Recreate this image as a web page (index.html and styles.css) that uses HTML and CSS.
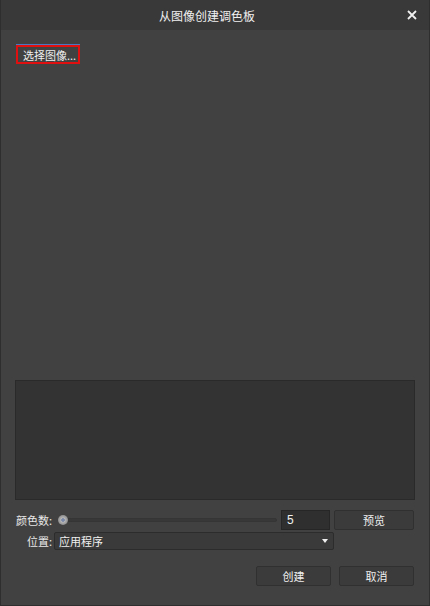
FILE: index.html
```html
<!DOCTYPE html>
<html lang="zh">
<head>
<meta charset="utf-8">
<link rel="stylesheet" href="styles.css">
</head>
<body>
<div class="dialog">
  <div class="titlebar">
    <span class="title">从图像创建调色板</span>
    <span class="close">
      <svg width="10" height="10" viewBox="0 0 10 10"><path d="M1 1 L9 9 M9 1 L1 9" stroke="#f0f0f0" stroke-width="1.8" fill="none"/></svg>
    </span>
  </div>
  <div class="content">
    <div class="top">
      <button class="select-btn">选择图像...</button>
    </div>
    <div class="preview"></div>
    <div class="row row1">
      <span class="label">颜色数:</span>
      <div class="slider"><div class="track"></div><div class="thumb"></div></div>
      <div class="numbox">5</div>
      <button class="btn preview-btn">预览</button>
    </div>
    <div class="row row2">
      <span class="label">位置:</span>
      <div class="select"><span>应用程序</span><span class="arrow"></span></div>
    </div>
    <div class="actions">
      <button class="btn action">创建</button>
      <button class="btn action">取消</button>
    </div>
  </div>
</div>
</body>
</html>
```
FILE: styles.css
```css
* { box-sizing: border-box; }
html, body { margin: 0; padding: 0; background: #414141; }
body {
  font-family: "Noto Sans CJK SC", "Liberation Sans", sans-serif;
  font-size: 11px;
  color: #e8e8e8;
}
.dialog {
  width: 430px;
  height: 606px;
  display: flex;
  flex-direction: column;
  background: #414141;
  border: 1px solid #2e2e2e;
  border-top: none;
}
.titlebar {
  height: 30px;
  flex: none;
  background: #393939;
  display: flex;
  align-items: center;
  justify-content: center;
  padding-right: 16px;
  position: relative;
}
.title { font-size: 12px; color: #f0f0f0; }
.close {
  position: absolute;
  right: 12px;
  top: 10px;
  width: 10px;
  height: 10px;
  display: flex;
}
.content {
  flex: 1;
  display: flex;
  flex-direction: column;
  padding: 15px 14px 19px 14px;
}
.top { flex: 1; }
.select-btn {
  font-family: inherit;
  font-size: 11px;
  color: #f0f0f0;
  background: #414141;
  border: 2px solid #e01010;
  box-shadow: 0 -1px 0 #4a78c0;
  height: 19px;
  width: 64px;
  padding: 0 0 0 5px;
  line-height: 14px;
  margin-left: 1px;
  display: flex;
  align-items: center;
  white-space: nowrap;
}
.preview {
  height: 120px;
  background: #333333;
  border: 1px solid #2a2a2a;
}
.row { display: flex; align-items: center; white-space: nowrap; }
.row1 { margin-top: 10px; height: 20px; }
.row2 { margin-top: 2px; height: 18px; }
.label { width: 37px; text-align: right; color: #e8e8e8; flex: none; white-space: nowrap; }
.slider {
  position: relative;
  width: 222px;
  height: 20px;
  margin-left: 3px;
  margin-right: 4px;
  flex: none;
}
.track {
  position: absolute;
  left: 4px; right: 0;
  top: 8px;
  height: 4px;
  border-radius: 2px;
  background: #383838;
  border: 1px solid #353535;
}
.thumb {
  position: absolute;
  left: 3px;
  top: 5px;
  width: 10px;
  height: 10px;
  border-radius: 50%;
  background: radial-gradient(circle at 50% 50%, #7a88a8 0 1.5px, #b8b8b8 2px, #8c8c8c 5px);
}
.numbox {
  width: 49px;
  height: 20px;
  background: #2f2f2f;
  border: 1px solid #262626;
  padding-left: 5px;
  line-height: 18px;
  font-family: "Liberation Sans", sans-serif;
  font-size: 12px;
  color: #f0f0f0;
  flex: none;
}
.btn {
  font-family: inherit;
  font-size: 11px;
  color: #f0f0f0;
  background: #3b3b3b;
  border: 1px solid #303030;
  border-radius: 2px;
  padding: 0;
  display: flex;
  align-items: center;
  justify-content: center;
}
.preview-btn { width: 80px; height: 20px; margin-left: 4px; }
.select {
  width: 280px;
  height: 18px;
  margin-left: 2px;
  background: #3a3a3a;
  border: 1px solid #2c2c2c;
  border-radius: 2px;
  display: flex;
  align-items: center;
  justify-content: space-between;
  padding: 0 4px 0 4px;
  color: #f0f0f0;
  flex: none;
}
.arrow {
  width: 0; height: 0;
  border-left: 3.5px solid transparent;
  border-right: 3.5px solid transparent;
  border-top: 4px solid #f0f0f0;
  margin-right: 1px;
}
.actions {
  display: flex;
  justify-content: flex-end;
  gap: 8px;
  margin-top: 16px;
  padding-right: 1px;
}
.action { width: 75px; height: 20px; }
```
